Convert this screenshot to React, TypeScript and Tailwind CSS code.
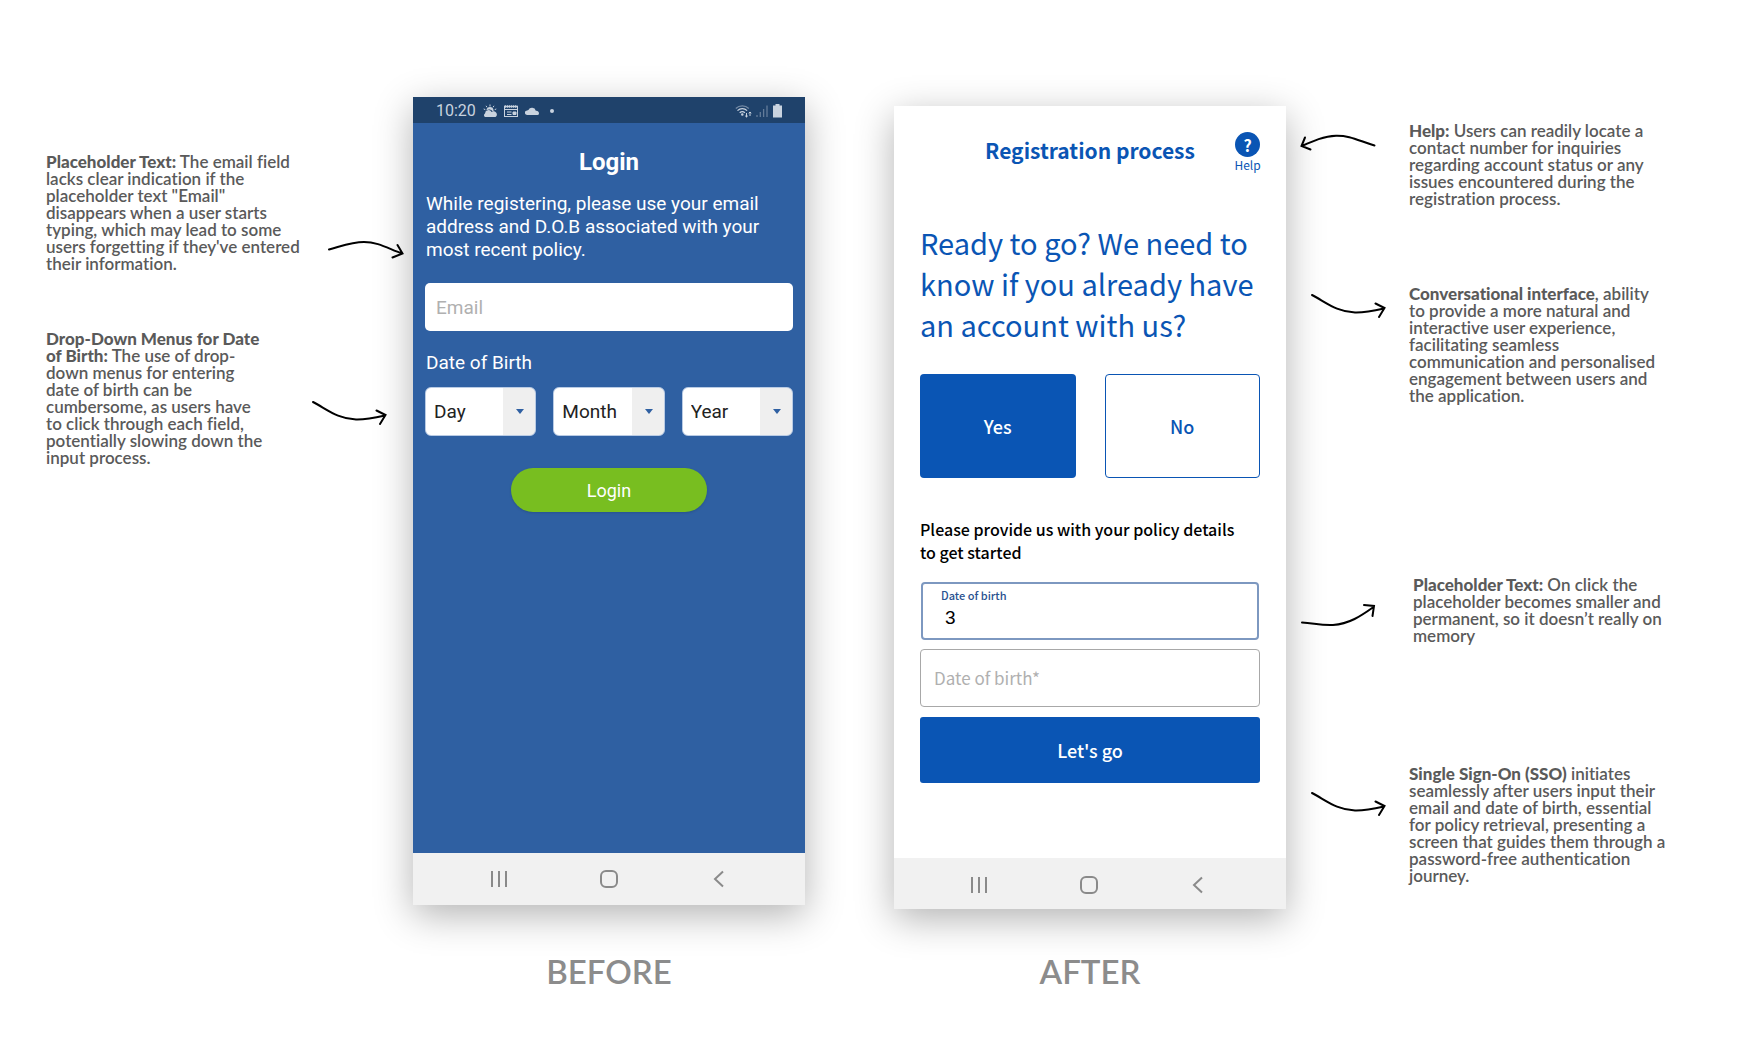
const noteArrows = {
  over: (
    <svg width="76" height="20" viewBox="0 0 76 20" fill="none" stroke="#000" strokeWidth="2" strokeLinecap="round">
      <path d="M1 9.5 C14 6 24 2 36 2 C50 2 60 8.500 74 13.500 M69.500 5 L74.500 13.500 L64.500 17.500" />
    </svg>
  ),
  under: (
    <svg width="76" height="26" viewBox="0 0 76 26" fill="none" stroke="#000" strokeWidth="2" strokeLinecap="round">
      <path d="M1 2 C16 10 26 19 44 19.500 C54 19.800 62 18 73 15.500 M64.500 10.500 L73.500 15 L68 24" />
    </svg>
  ),
  back: (
    <svg width="76" height="20" viewBox="0 0 76 20" fill="none" stroke="#000" strokeWidth="2" strokeLinecap="round">
      <path d="M74.500 11.500 C58 6.500 50 1.500 36 1.800 C24 2 13 7 2 12 M5 3.500 L1.500 12 L10.500 15.500" />
    </svg>
  ),
  up: (
    <svg width="76" height="26" viewBox="0 0 76 26" fill="none" stroke="#000" strokeWidth="2" strokeLinecap="round">
      <path d="M1 19.500 C14 20.500 20 22.500 32 22 C48 21 60 13 72.500 4 M63 2 L73 3 L71.500 13" />
    </svg>
  ),
};

function NoteText({ title, lines }: { title: string; lines: string[] }) {
  return (
    <p className="font-['Lato'] text-[17px] leading-[17px] font-semibold whitespace-pre text-[#5a5a5a] [font-variant-ligatures:none]">
      <strong className="font-black">{title}</strong>
      {lines.join("\n")}
    </p>
  );
}

function NavBar({ className }: { className: string }) {
  return (
    <nav aria-label="System" className={`flex items-center justify-between bg-[#f1f1f1] text-[#8a8a8a] ${className}`}>
      <button type="button" aria-label="Recent apps">
        <svg width="22" height="22" viewBox="0 0 22 22" fill="none" stroke="currentColor" strokeWidth="2">
          <path d="M4 3v16M11 3v16M18 3v16" />
        </svg>
      </button>
      <button type="button" aria-label="Home">
        <svg width="22" height="22" viewBox="0 0 22 22" fill="none" stroke="currentColor" strokeWidth="2">
          <rect x="3" y="3" width="16" height="16" rx="5" />
        </svg>
      </button>
      <button type="button" aria-label="Back">
        <svg width="22" height="22" viewBox="0 0 22 22" fill="none" stroke="currentColor" strokeWidth="2">
          <path d="M15 3.500 L7 11 L15 18.500" />
        </svg>
      </button>
    </nav>
  );
}

function StatusBar() {
  return (
    <div className="flex h-[26px] items-center justify-between bg-[#1f426b] pt-0.5 pr-[22px] pl-[23px] text-[#c9d3df]">
      <div className="flex items-center gap-[7px]">
        <span className="text-base leading-none">10:20</span>
        <svg width="14" height="14" viewBox="0 0 14 14" fill="currentColor">
          <path d="M2 13a2 2 0 0 1 0-3.500 3.500 3.500 0 0 1 6.600-1.500A2.600 2.600 0 0 1 12.500 13z" />
          <path d="M3.500 6.500a3.500 3.500 0 0 1 7 0l.3 1H9.800A4 4 0 0 0 3.500 6.500z" />
          <path d="M7 .5v2M3 1.800l1 1.500M11 1.800l-1 1.500M.7 5l1.600.6M13.300 5l-1.600.6" stroke="currentColor" />
        </svg>
        <svg width="14" height="14" viewBox="0 0 14 14" fill="none" stroke="currentColor">
          <rect x=".5" y="2.500" width="13" height="10" />
          <path d="M.5 2.500h13" strokeWidth="2.400" strokeDasharray="1.500 .6" />
          <path d="M1 5.500h12M3 8h4.500M3 10.500h4.500" />
          <path d="M9 8h3v2.500H9z" fill="currentColor" />
        </svg>
        <svg width="14" height="14" viewBox="0 0 14 14" fill="currentColor">
          <path d="M2.300 11a2.300 2.300 0 0 1-.2-4.600 2.500 2.500 0 0 1 1.300-.3 3.900 3.900 0 0 1 7.400.6A3 3 0 0 1 14 9.500Q13.800 11 12.500 11z" />
        </svg>
        <span className="ml-1 size-1 rounded-full bg-current" />
      </div>
      <div className="flex items-center gap-1">
        <svg width="17" height="14" viewBox="0 0 17 14" fill="none" stroke="currentColor" strokeWidth="1.300">
          <path d="M.8 4.500a9.500 9.500 0 0 1 13 0" opacity=".5" />
          <path d="M2.500 6.600a7 7 0 0 1 9.600 0M4.700 8.700a4 4 0 0 1 5.200 0" />
          <circle cx="7.300" cy="10.600" r=".6" />
          <path d="M11.500 9v4M10.200 11.800l1.300 1.200 1.300-1.200M15 12v-4M13.700 9.200L15 8l1.300 1.200" strokeWidth="1" />
        </svg>
        <svg width="12" height="14" viewBox="0 0 12 14" stroke="currentColor" strokeWidth="1.300" opacity=".4">
          <path d="M1 11v2M4.300 8v5M7.600 5v8M11 1.500v11.500" />
        </svg>
        <svg width="11" height="14" viewBox="0 0 11 14" fill="currentColor">
          <path d="M3.500 0h4v1.500H10V13.500H1V1.500h2.500z" />
        </svg>
      </div>
    </div>
  );
}

function DateSelect({ label }: { label: string }) {
  return (
    <div className="relative flex-1">
      <select
        aria-label={label}
        className="h-[49px] w-full appearance-none rounded-md border border-[#b9cbe4] bg-[linear-gradient(to_left,#efefef_32px,#ffffff_32px)] pt-0.5 pl-2 text-[19px] text-[#222]"
      >
        <option>{label}</option>
      </select>
      <svg className="pointer-events-none absolute top-[22px] right-3" width="8" height="5" viewBox="0 0 8 5" fill="#2f60a2">
        <path d="M0 0h8L4 5z" />
      </svg>
    </div>
  );
}

function LoginPhone() {
  return (
    <section className="flex min-h-[808px] flex-col bg-[#2f60a2] font-['Roboto'] text-white shadow-[0_10px_36px_rgba(0,0,0,0.3)]">
      <StatusBar />
      <form className="flex flex-1 flex-col px-3 pt-6">
        <h1 className="text-center text-2xl leading-[30px] font-bold">Login</h1>
        <p className="mt-[15px] pl-px text-[19px] leading-[23px]">
          While registering, please use your email
          <br />
          address and D.O.B associated with your
          <br />
          most recent policy.
        </p>
        <input
          aria-label="Email"
          placeholder="Email"
          className="mt-[22px] h-12 rounded-[5px] bg-white px-[11px] text-[19px] text-[#222] placeholder:text-[#b0b0b0]"
        />
        <fieldset className="mt-5">
          <legend className="pl-px text-[19px] leading-[23px]">Date of Birth</legend>
          <div className="mt-[13px] flex gap-[17px]">
            <DateSelect label="Day" />
            <DateSelect label="Month" />
            <DateSelect label="Year" />
          </div>
        </fieldset>
        <button type="button" className="mt-8 h-11 w-[196px] self-center rounded-full bg-[#78be20] pt-0.5 text-lg shadow-sm">
          Login
        </button>
      </form>
      <NavBar className="h-[52px] px-[75px]" />
    </section>
  );
}

function RegistrationPhone() {
  return (
    <section className="mt-[9px] flex min-h-[803px] flex-col bg-white font-['Noto_Sans_CJK_SC','Noto_Sans',sans-serif] text-[#0a55b4] shadow-[0_10px_36px_rgba(0,0,0,0.3)]">
      <form className="flex flex-1 flex-col px-[26px] pt-[26px]">
        <header className="grid grid-cols-[25px_1fr_25px] items-start">
          <h1 className="col-start-2 mt-[3px] text-center text-[21px] leading-[30px] font-bold">Registration process</h1>
          <button type="button" className="flex flex-col items-center">
            <span className="grid size-[25px] place-items-center rounded-full bg-[#0a55b4] text-base leading-none font-bold text-white">?</span>
            <span className="text-xs leading-4">Help</span>
          </button>
        </header>
        <h2 className="mt-[49px] text-[29px] leading-[41px] whitespace-nowrap">
          Ready to go? We need to
          <br />
          know if you already have
          <br />
          an account with us?
        </h2>
        <div className="mt-[29px] grid grid-cols-2 gap-[29px]">
          <button type="button" className="h-[104px] rounded-[4px] bg-[#0a55b4] text-lg font-medium text-white">Yes</button>
          <button type="button" className="h-[104px] rounded-[4px] border border-[#0a55b4] text-lg font-medium">No</button>
        </div>
        <p className="mt-10 text-base leading-[23px] font-medium text-black">
          Please provide us with your policy details
          <br />
          to get started
        </p>
        <div className="mx-px mt-[18px] flex h-[58px] flex-col rounded-[4px] border-2 border-[#7d98c0] pt-px pl-[18px]">
          <label htmlFor="dob" className="text-[11px] leading-5 font-medium text-[#2a5290]">Date of birth</label>
          <input id="dob" defaultValue="3" className="ml-1 h-[26px] font-['Liberation_Sans'] text-[19px] text-black outline-none" />
        </div>
        <input
          aria-label="Date of birth*"
          placeholder="Date of birth*"
          className="mt-[9px] h-[58px] rounded-[4px] border border-[#a8a8a8] px-[13px] pb-0.5 text-[17px] text-black placeholder:text-[#b0b0b0]"
        />
        <button type="button" className="mt-[10px] h-[66px] rounded-[3px] bg-[#0a55b4] text-lg font-medium text-white">Let's go</button>
      </form>
      <NavBar className="h-[51px] pt-0.5 pr-[77px] pl-[74px]" />
    </section>
  );
}

export default function App() {
  return (
    <main className="flex min-h-screen items-start bg-white">
      <aside className="min-w-0 flex-[413] whitespace-nowrap">
        <div className="flex items-start justify-between pt-[153px] pr-[9px] pl-[46px]">
          <NoteText
            title="Placeholder Text:"
            lines={[
              " The email field",
              "lacks clear indication if the",
              'placeholder text "Email"',
              "disappears when a user starts",
              "typing, which may lead to some",
              "users forgetting if they've entered",
              "their information.",
            ]}
          />
          <div className="mt-[87px]">{noteArrows.over}</div>
        </div>
        <div className="mt-[58px] flex items-start justify-between pr-[25px] pl-[46px]">
          <NoteText
            title={"Drop-Down Menus for Date\nof Birth:"}
            lines={[
              " The use of drop-",
              "down menus for entering",
              "date of birth can be",
              "cumbersome, as users have",
              "to click through each field,",
              "potentially slowing down the",
              "input process.",
            ]}
          />
          <div className="mt-[70px]">{noteArrows.under}</div>
        </div>
      </aside>
      <figure className="w-[392px] pt-[97px]">
        <LoginPhone />
        <figcaption className="mt-[46px] text-center font-['Lato'] text-[33px] leading-[40px] font-semibold text-[#8c8c8c]">BEFORE</figcaption>
      </figure>
      <figure className="ml-[89px] w-[392px] pt-[97px]">
        <RegistrationPhone />
        <figcaption className="mt-[42px] text-center font-['Lato'] text-[33px] leading-[40px] font-semibold text-[#8c8c8c]">AFTER</figcaption>
      </figure>
      <aside className="min-w-0 flex-[453] whitespace-nowrap">
        <div className="flex items-start gap-[33px] pt-[122px] pl-[14px]">
          <div className="mt-3">{noteArrows.back}</div>
          <NoteText
            title="Help:"
            lines={[
              " Users can readily locate a",
              "contact number for inquiries",
              "regarding account status or any",
              "issues encountered during the",
              "registration process.",
            ]}
          />
        </div>
        <div className="mt-[78px] flex items-start gap-[22px] pl-[25px]">
          <div className="mt-2">{noteArrows.under}</div>
          <NoteText
            title="Conversational interface"
            lines={[
              ", ability",
              "to provide a more natural and",
              "interactive user experience,",
              "facilitating seamless",
              "communication and personalised",
              "engagement between users and",
              "the application.",
            ]}
          />
        </div>
        <div className="mt-[172px] flex items-start gap-9 pl-[15px]">
          <div className="mt-[27px]">{noteArrows.up}</div>
          <NoteText
            title="Placeholder Text:"
            lines={[
              " On click the",
              "placeholder becomes smaller and",
              "permanent, so it doesn’t really on",
              "memory",
            ]}
          />
        </div>
        <div className="mt-[121px] flex items-start gap-[22px] pl-[25px]">
          <div className="mt-[26px]">{noteArrows.under}</div>
          <NoteText
            title="Single Sign-On (SSO)"
            lines={[
              " initiates",
              "seamlessly after users input their",
              "email and date of birth, essential",
              "for policy retrieval, presenting a",
              "screen that guides them through a",
              "password-free authentication",
              "journey.",
            ]}
          />
        </div>
      </aside>
    </main>
  );
}
